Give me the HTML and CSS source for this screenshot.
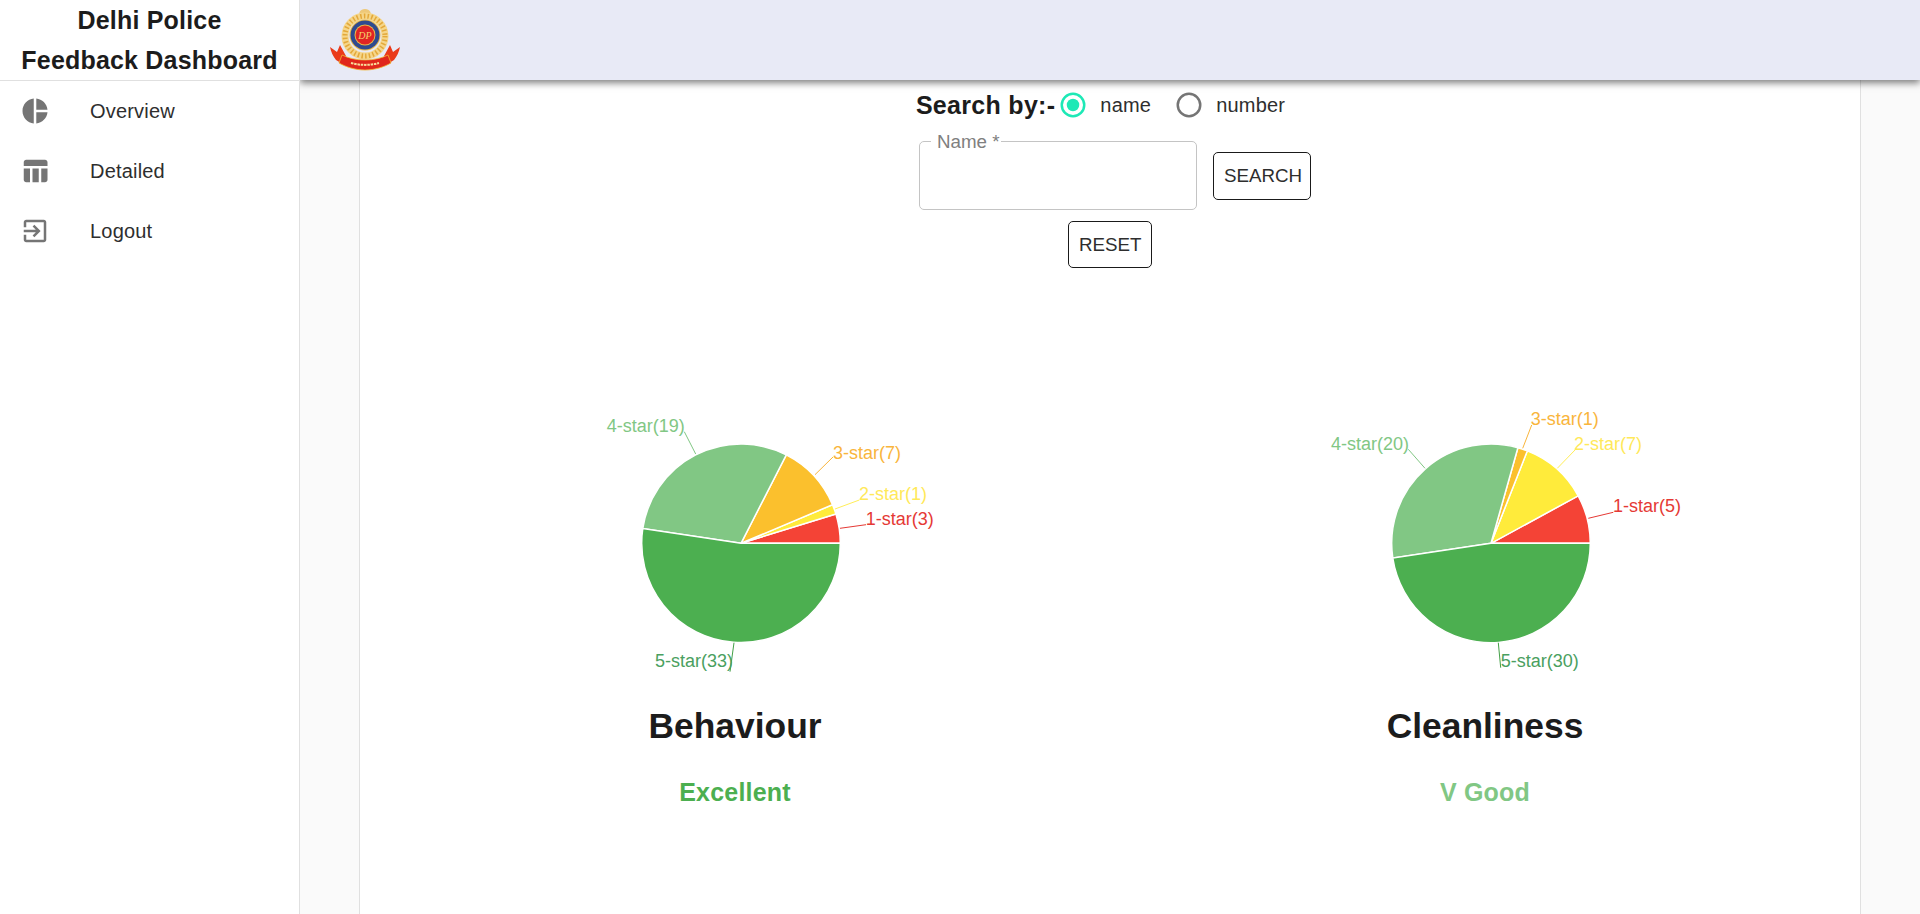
FILE: index.html
```html
<!DOCTYPE html>
<html lang="en">
<head>
<meta charset="utf-8">
<title>Delhi Police Feedback Dashboard</title>
<link rel="stylesheet" href="styles.css">
</head>
<body>
<div class="app">
  <aside class="sidebar">
    <div class="brand">Delhi Police<br>Feedback Dashboard</div>
    <nav class="nav">
      <a class="nav-item"><svg class="nav-icon" viewBox="0 0 24 24"><path d="M11 2v20c-5.07-.5-9-4.79-9-10s3.93-9.5 9-10zm2.03 0v8.99H22c-.47-4.74-4.24-8.52-8.97-8.99zm0 11.01V22c4.74-.47 8.5-4.25 8.97-8.99h-8.97z"/></svg><span>Overview</span></a>
      <a class="nav-item"><svg class="nav-icon" viewBox="0 0 24 24"><path d="M10 10.02h5V21h-5zM17 21h3c1.1 0 2-.9 2-2v-9h-5v11zm3-18H5c-1.1 0-2 .9-2 2v3h19V5c0-1.1-.9-2-2-2zM3 19c0 1.1.9 2 2 2h3V10H3v9z"/></svg><span>Detailed</span></a>
      <a class="nav-item"><svg class="nav-icon" viewBox="0 0 24 24"><path d="M10.09 15.59L11.5 17l5-5-5-5-1.41 1.41L12.67 11H3v2h9.67l-2.58 2.59zM19 3H5c-1.11 0-2 .9-2 2v4h2V5h14v14H5v-4H3v4c0 1.1.89 2 2 2h14c1.1 0 2-.9 2-2V5c0-1.1-.9-2-2-2z"/></svg><span>Logout</span></a>
    </nav>
  </aside>
  <div class="right">
    <header class="topbar">
      <svg class="emblem" viewBox="0 0 90 80">
        <path d="M40 17c-2-4 0-8 5-8s7 4 5 8z" fill="#eec878"/>
        <rect x="39" y="15" width="12" height="3" fill="#dfa63e"/>
        <circle cx="45" cy="36" r="20" fill="none" stroke="#f5d68a" stroke-width="7"/>
        <circle cx="45" cy="36" r="20" fill="none" stroke="#e3a83a" stroke-width="5" stroke-dasharray="1.500 2.200"/>
        <circle cx="45" cy="35" r="15.500" fill="#e8b84a"/>
        <circle cx="45" cy="35" r="14.500" fill="#2f4a8f"/>
        <circle cx="45" cy="35" r="10.500" fill="#e8b84a"/>
        <circle cx="45" cy="35" r="9.500" fill="#e02424"/>
        <text class="emblem-text" x="45" y="38.500">DP</text>
        <path d="M10 47l7 5 3-7 6 11-2 9-8-5c-3-4-5-8-6-13zM80 47l-7 5-3-7-6 11 2 9 8-5c3-4 5-8 6-13z" fill="#ea3a1a"/>
        <path d="M22 55c6 3 14 5 23 5s17-2 23-5l3 8c-7 4-16 7-26 7s-19-3-26-7z" fill="#e0261c" stroke="#f2b632" stroke-width=".8"/>
        <path d="M31 63c9 2.500 19 2.500 28 0" fill="none" stroke="#f8dc9a" stroke-width="2" stroke-dasharray="2.500 .8"/>
      </svg>
    </header>
    <main class="main">
      <section class="paper">
        <div class="search-type">
          <span class="search-title">Search by:-</span>
          <label class="radio-option">
            <svg class="radio on" viewBox="0 0 24 24"><circle cx="12" cy="12" r="9" fill="none" stroke-width="2"/><circle cx="12" cy="12" r="5"/></svg>
            <span>name</span>
          </label>
          <label class="radio-option">
            <svg class="radio off" viewBox="0 0 24 24"><circle cx="12" cy="12" r="9" fill="none" stroke-width="2"/></svg>
            <span>number</span>
          </label>
        </div>
        <div class="search-fields">
          <fieldset class="field"><legend class="field-label">Name *</legend></fieldset>
          <button class="btn btn-search" type="button">SEARCH</button>
        </div>
        <button class="btn btn-reset" type="button">RESET</button>
        <div class="charts">
          <div class="chart">
            <svg class="pie" viewBox="360 400 750 280">
              <path class="s1" d="M741 543.3L840.300 543.3A99.300 99.300 0 0 0 835.900 514z"/>
              <path class="s2" d="M741 543.3L835.900 514A99.300 99.300 0 0 0 832.500 504.700z"/>
              <path class="s3" d="M741 543.3L832.500 504.700A99.300 99.300 0 0 0 786.300 454.900z"/>
              <path class="s4" d="M741 543.3L786.300 454.900A99.300 99.300 0 0 0 642.800 528.500z"/>
              <path class="s5" d="M741 543.3L642.800 528.500A99.300 99.300 0 1 0 840.300 543.3z"/>
              <line class="l1" x1="840" y1="528.300" x2="866" y2="524.700"/>
              <line class="l2" x1="835" y1="509" x2="859.300" y2="500"/>
              <line class="l3" x1="815" y1="474.700" x2="833" y2="457"/>
              <line class="l4" x1="695.700" y1="454" x2="684.300" y2="431.700"/>
              <line class="l5" x1="734" y1="642.700" x2="730" y2="671.700"/>
              <text class="t1" x="865.700" y="525">1-star(3)</text>
              <text class="t2" x="859" y="500">2-star(1)</text>
              <text class="t3" x="833" y="459">3-star(7)</text>
              <text class="t4" x="606.700" y="432">4-star(19)</text>
              <text class="t5" x="655" y="667">5-star(33)</text>
            </svg>
            <h2 class="chart-title">Behaviour</h2>
            <p class="rating rating-excellent">Excellent</p>
          </div>
          <div class="chart">
            <svg class="pie" viewBox="1110 400 750 280">
              <path class="s1" d="M1491 543.3L1590.300 543.3A99.300 99.300 0 0 0 1578.200 495.800z"/>
              <path class="s2" d="M1491 543.3L1578.200 495.800A99.300 99.300 0 0 0 1527.300 450.900z"/>
              <path class="s3" d="M1491 543.3L1527.300 450.900A99.300 99.300 0 0 0 1517.900 447.700z"/>
              <path class="s4" d="M1491 543.3L1517.900 447.700A99.300 99.300 0 0 0 1392.800 558.100z"/>
              <path class="s5" d="M1491 543.3L1392.800 558.100A99.300 99.300 0 0 0 1590.300 543.3z"/>
              <line class="l1" x1="1588.300" y1="518.300" x2="1613.300" y2="512.300"/>
              <line class="l2" x1="1557.300" y1="468.300" x2="1575" y2="450"/>
              <line class="l3" x1="1522.700" y1="448.300" x2="1531.700" y2="425"/>
              <line class="l4" x1="1425" y1="468.300" x2="1408.300" y2="449.300"/>
              <line class="l5" x1="1498.300" y1="642.700" x2="1500.700" y2="667.700"/>
              <text class="t1" x="1613" y="512">1-star(5)</text>
              <text class="t2" x="1574" y="450">2-star(7)</text>
              <text class="t3" x="1530.700" y="425">3-star(1)</text>
              <text class="t4" x="1331" y="450">4-star(20)</text>
              <text class="t5" x="1500.700" y="667">5-star(30)</text>
            </svg>
            <h2 class="chart-title">Cleanliness</h2>
            <p class="rating rating-vgood">V Good</p>
          </div>
        </div>
      </section>
    </main>
  </div>
</div>
</body>
</html>
```
FILE: styles.css
```css
* { box-sizing: border-box; }
html, body { margin: 0; height: 100%; }
body {
  font-family: "Liberation Sans", Arial, sans-serif;
  color: #212121;
  background: #fafafa;
  overflow: hidden;
}
.app { display: flex; height: 914px; }

.sidebar {
  width: 300px;
  flex: none;
  background: #fff;
  border-right: 1px solid #e0e0e0;
  position: relative;
  z-index: 2;
}
.brand {
  height: 81px;
  border-bottom: 1px solid #e0e0e0;
  text-align: center;
  font-size: 25px;
  font-weight: 700;
  line-height: 40px;
  letter-spacing: 0.19px;
  color: #1c1c1c;
}
.nav { display: flex; flex-direction: column; }
.nav-item {
  height: 60px;
  display: flex;
  align-items: center;
  gap: 40px;
  padding-left: 20px;
  font-size: 20px;
  letter-spacing: 0.19px;
  color: #2e2e2e;
}
.nav-icon { width: 30px; height: 30px; fill: #757575; flex: none; }

.right { flex: 1; display: flex; flex-direction: column; min-width: 0; }
.topbar {
  height: 80px;
  flex: none;
  background: #e8eaf6;
  padding-left: 20px;
  box-shadow: 0 3px 7px rgba(0, 0, 0, 0.5);
  position: relative;
  z-index: 1;
}
.emblem { display: block; width: 90px; height: 80px; }
.emblem-text {
  font-family: "Liberation Serif", serif;
  font-size: 10px;
  font-style: italic;
  fill: #f6d36a;
  text-anchor: middle;
}

.main { flex: 1; display: flex; justify-content: center; min-height: 0; }
.paper {
  width: 1502px;
  background: #fff;
  border-left: 1px solid #e0e0e0;
  border-right: 1px solid #e0e0e0;
  display: flex;
  flex-direction: column;
  align-items: center;
}

.search-type {
  height: 50px;
  display: flex;
  align-items: center;
  padding-right: 19px;
  font-size: 20px;
  letter-spacing: 0.19px;
  color: #2e2e2e;
}
.search-title {
  font-size: 25px;
  font-weight: 700;
  letter-spacing: 0.3px;
  color: #1c1c1c;
}
.radio-option { display: flex; align-items: center; gap: 12px; margin-left: 3px; }
.radio-option + .radio-option { margin-left: 23px; }
.radio { width: 30px; height: 30px; flex: none; }
.radio.on { fill: #1de9b6; stroke: #1de9b6; }
.radio.on circle:last-child { stroke: none; }
.radio.off { stroke: #757575; }

.search-fields { display: flex; align-items: flex-start; gap: 16px; padding-left: 10px; margin-top: 2px; }
.field {
  width: 278px;
  height: 78px;
  margin: 0;
  padding: 0 0 0 11px;
  border: 1px solid #c4c4c4;
  border-radius: 5px;
}
.field-label {
  padding: 0 1px 0 6px;
  height: 19px;
  font-size: 18.75px;
  line-height: 19px;
  color: #808080;
}
.btn {
  height: 48px;
  padding: 0 10px;
  font-family: inherit;
  font-size: 18.75px;
  color: #2e2e2e;
  background: #fff;
  border: 1px solid #1a1a1a;
  border-radius: 5px;
}
.btn-search { width: 98px; margin-top: 20px; }
.btn-reset { width: 84px; height: 47px; margin-top: 11px; }

.charts { display: flex; margin-top: 132px; }
.chart { width: 750px; display: flex; flex-direction: column; align-items: center; }
.pie { display: block; width: 750px; height: 280px; }
.pie path { stroke: #fff; stroke-width: 1.5; }
.pie line { stroke-width: 1; }
.pie text { font-size: 18px; }
.s1 { fill: #f44336; }
.s2 { fill: #ffeb3b; }
.s3 { fill: #fbc02d; }
.s4 { fill: #81c784; }
.s5 { fill: #4caf50; }
.l1 { stroke: #e53935; }
.l2 { stroke: #ffee58; }
.l3 { stroke: #f9b53c; }
.l4 { stroke: #81c784; }
.l5 { stroke: #43a047; }
.t1 { fill: #e53935; }
.t2 { fill: #ffe95a; }
.t3 { fill: #f9b53c; }
.t4 { fill: #81c784; }
.t5 { fill: #4aa060; }

.chart-title {
  margin: 24px 0 0;
  font-size: 35.400px;
  line-height: 44px;
  font-weight: 700;
  color: #1c1c1c;
}
.rating {
  margin: 28px 0 0;
  font-size: 25px;
  line-height: 32px;
  font-weight: 700;
  letter-spacing: 0.19px;
}
.rating-excellent { color: #4caf50; }
.rating-vgood { color: #81c784; }
```
